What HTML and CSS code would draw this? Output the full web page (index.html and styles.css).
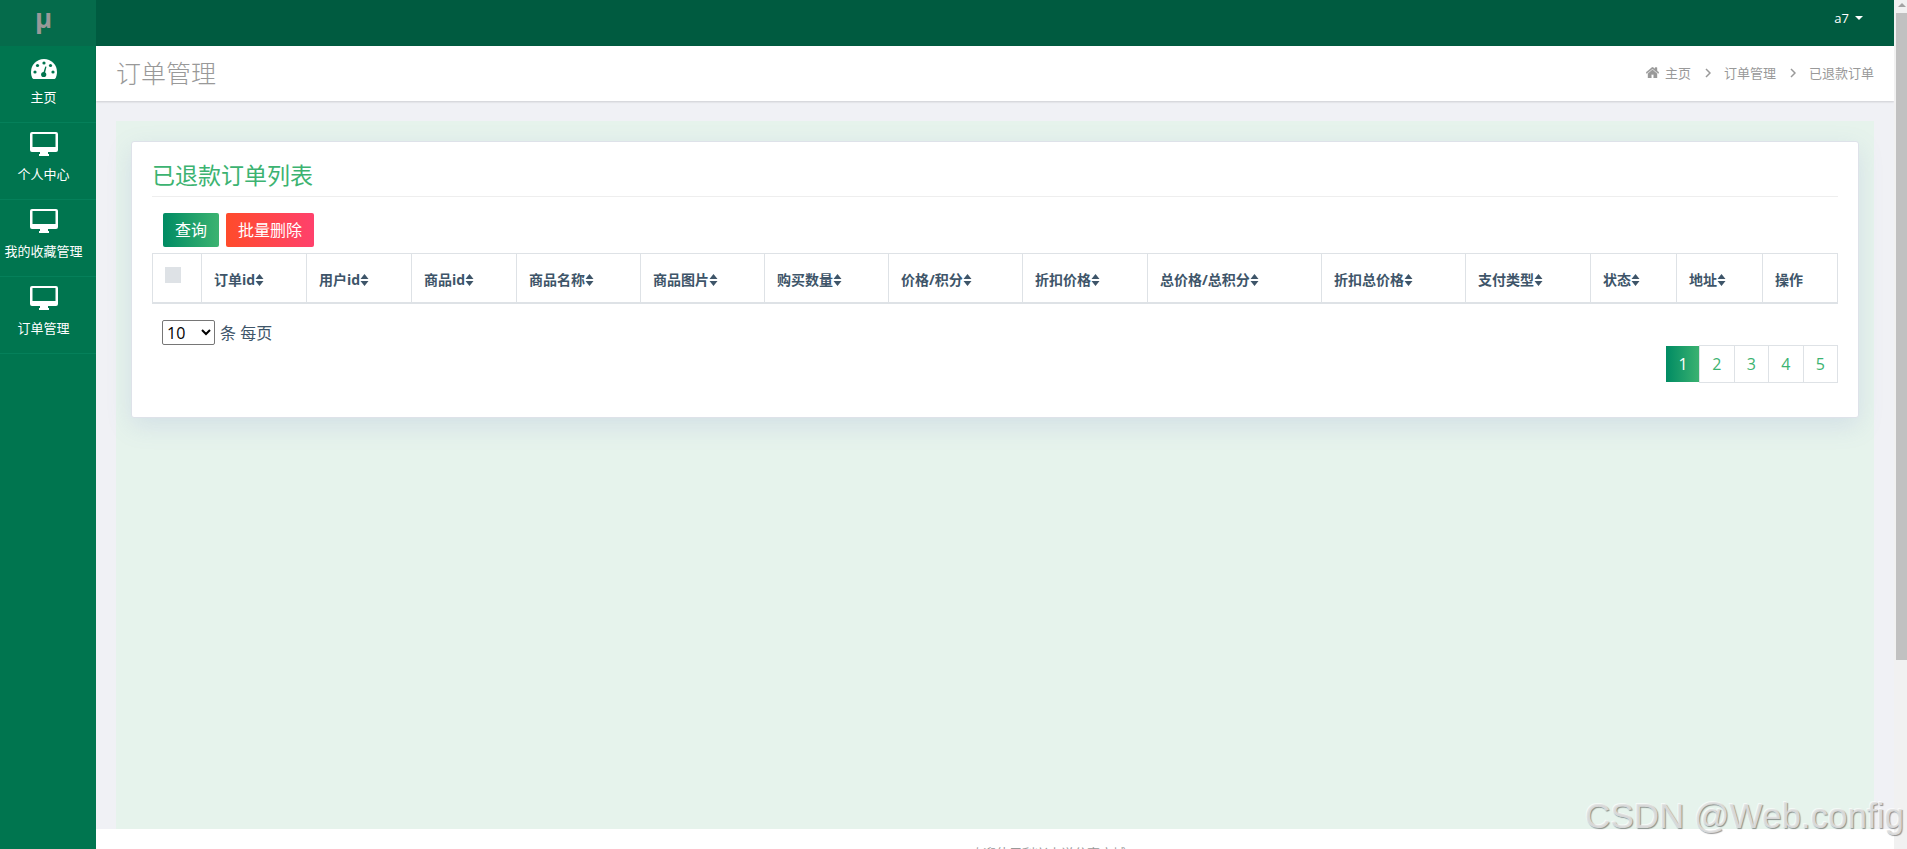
FILE: index.html
```
<!DOCTYPE html>
<html lang="zh-CN">
<head>
    <meta charset="UTF-8">
    <meta name="viewport" content="width=device-width, initial-scale=1.0">
    <title>订单管理</title>
    <link rel="stylesheet" href="styles.css">
</head>
<body>
    <!-- shared icons -->
    <svg class="icon-defs" width="0" height="0">
        <symbol id="icon-desktop" viewBox="0 0 28 24">
            <path fill-rule="evenodd" d="M2 0h24a2 2 0 0 1 2 2v16a2 2 0 0 1-2 2h-8v2h1v2H9v-2h1v-2H2a2 2 0 0 1-2-2V2a2 2 0 0 1 2-2zM2.500 2v13h23V2z"/>
        </symbol>
        <symbol id="icon-sort" viewBox="0 0 8 12">
            <path d="M4 0l4 5H0zM0 7h8l-4 5z"/>
        </symbol>
        <symbol id="icon-chevron" viewBox="0 0 6 10">
            <path d="M1 1l4 4-4 4" fill="none" stroke="#999" stroke-width="1.500"/>
        </symbol>
    </svg>

    <div class="page">
        <aside class="sidebar">
            <div class="logo">μ</div>
            <ul class="side-menu">
                <li>
                    <a href="#">
                        <svg class="menu-icon dashboard" viewBox="0 0 26 20">
                            <path d="M13 0a13 13 0 0 1 13 13c0 2.500-.6 4.800-1.700 6.600-.2.300-.5.400-.8.400h-21c-.3 0-.6-.1-.8-.4C.6 17.800 0 15.500 0 13A13 13 0 0 1 13 0z" fill="#fff"/>
                            <g fill="#00754f">
                                <circle cx="4" cy="13" r="1.600"/>
                                <circle cx="6.500" cy="6.500" r="1.600"/>
                                <circle cx="13" cy="4" r="1.600"/>
                                <circle cx="19.500" cy="6.500" r="1.600"/>
                                <circle cx="22" cy="13" r="1.600"/>
                                <circle cx="12.700" cy="15.500" r="2.600"/>
                                <path d="M14.300 7.400l1.200.3-1.800 7.300-1.600-.4z"/>
                            </g>
                        </svg>
                        <span>主页</span>
                    </a>
                </li>
                <li>
                    <a href="#">
                        <svg class="menu-icon"><use href="#icon-desktop"/></svg>
                        <span>个人中心</span>
                    </a>
                </li>
                <li>
                    <a href="#">
                        <svg class="menu-icon"><use href="#icon-desktop"/></svg>
                        <span>我的收藏管理</span>
                    </a>
                </li>
                <li>
                    <a href="#">
                        <svg class="menu-icon"><use href="#icon-desktop"/></svg>
                        <span>订单管理</span>
                    </a>
                </li>
            </ul>
        </aside>

        <div class="main">
            <nav class="topbar">
                <a class="user" href="#">a7 <i class="caret"></i></a>
            </nav>

            <header class="page-header">
                <h1>订单管理</h1>
                <ol class="breadcrumb">
                    <li>
                        <svg class="home" viewBox="0 0 13 11">
                            <path d="M6.500 2.700l4.500 3.800V11H7.700V7.500H5.300V11H2V6.500zM6.500 0L9 2.100V.6h2v3.200l2 1.700-.7 1-5.800-4.800L.7 6.500 0 5.500z" fill="#999" stroke="#999" stroke-width=".4"/>
                        </svg>
                        主页
                    </li>
                    <li><svg class="chevron"><use href="#icon-chevron"/></svg>订单管理</li>
                    <li><svg class="chevron"><use href="#icon-chevron"/></svg>已退款订单</li>
                </ol>
            </header>

            <div class="content">
                <section class="card">
                    <h3 class="card-title">已退款订单列表</h3>
                    <div class="actions">
                        <button class="btn btn-success">查询</button>
                        <button class="btn btn-danger">批量删除</button>
                    </div>
                    <table class="table">
                        <colgroup>
                            <col class="w-check">
                            <col class="w-id"><col class="w-id"><col class="w-id">
                            <col class="w-name"><col class="w-name"><col class="w-name">
                            <col class="w-price">
                            <col class="w-discount">
                            <col class="w-total">
                            <col class="w-discount-total">
                            <col class="w-pay">
                            <col class="w-state"><col class="w-state">
                            <col>
                        </colgroup>
                        <thead>
                            <tr>
                                <th><span class="checkbox"></span></th>
                                <th>订单id<svg class="sort"><use href="#icon-sort"/></svg></th>
                                <th>用户id<svg class="sort"><use href="#icon-sort"/></svg></th>
                                <th>商品id<svg class="sort"><use href="#icon-sort"/></svg></th>
                                <th>商品名称<svg class="sort"><use href="#icon-sort"/></svg></th>
                                <th>商品图片<svg class="sort"><use href="#icon-sort"/></svg></th>
                                <th>购买数量<svg class="sort"><use href="#icon-sort"/></svg></th>
                                <th>价格/积分<svg class="sort"><use href="#icon-sort"/></svg></th>
                                <th>折扣价格<svg class="sort"><use href="#icon-sort"/></svg></th>
                                <th>总价格/总积分<svg class="sort"><use href="#icon-sort"/></svg></th>
                                <th>折扣总价格<svg class="sort"><use href="#icon-sort"/></svg></th>
                                <th>支付类型<svg class="sort"><use href="#icon-sort"/></svg></th>
                                <th>状态<svg class="sort"><use href="#icon-sort"/></svg></th>
                                <th>地址<svg class="sort"><use href="#icon-sort"/></svg></th>
                                <th>操作</th>
                            </tr>
                        </thead>
                    </table>
                    <div class="page-size">
                        <select>
                            <option>10</option>
                            <option>25</option>
                            <option>50</option>
                        </select>
                        <span>条 每页</span>
                    </div>
                    <ul class="pagination">
                        <li class="active">1</li>
                        <li>2</li>
                        <li>3</li>
                        <li>4</li>
                        <li>5</li>
                    </ul>
                </section>
            </div>

            <footer class="footer">欢迎使用利兴小说分享商城</footer>
        </div>

        <div class="scrollbar">
            <i class="scroll-up"></i>
            <div class="scroll-thumb"></div>
        </div>
    </div>

    <div class="watermark">CSDN @Web.config</div>
</body>
</html>
```

FILE: styles.css
```
* {
    margin: 0;
    padding: 0;
    box-sizing: border-box;
}

body {
    height: 849px;
    overflow: hidden;
    background: #f0f1f5;
    color: #3e5569;
    font-family: "Open Sans", "Noto Sans CJK SC", sans-serif;
    font-size: 16px;
}

ul, ol {
    list-style: none;
}

a {
    color: inherit;
    text-decoration: none;
}

.icon-defs {
    position: absolute;
}

.page {
    display: flex;
    height: 849px;
    overflow: hidden;
}

/* sidebar */
.sidebar {
    width: 96px;
    background: #00754f;
    color: #fff;
}

.logo {
    height: 46px;
    padding-right: 9px;
    background: #056b4b;
    color: #999;
    font-size: 26px;
    font-weight: bold;
    line-height: 36px;
    text-align: center;
}

.side-menu li {
    height: 77px;
    border-bottom: 1px solid #05805a;
}

.side-menu a {
    display: flex;
    flex-direction: column;
    align-items: center;
    padding: 9px 9px 0 0;
    font-size: 13px;
    line-height: 20px;
    white-space: nowrap;
}

.menu-icon {
    width: 28px;
    height: 24px;
    margin-bottom: 8px;
    fill: #fff;
}

.menu-icon.dashboard {
    width: 26px;
    height: 20px;
    margin: 4px 0 8px;
}

/* main column */
.main {
    display: flex;
    flex: 1;
    flex-direction: column;
    min-width: 0;
}

.topbar {
    display: flex;
    flex: none;
    justify-content: flex-end;
    height: 46px;
    padding: 8px 31px 0 0;
    background: #005b40;
    color: #fff;
    font-size: 13px;
    line-height: 20px;
}

.user {
    display: flex;
    align-items: center;
    height: 20px;
    gap: 6px;
    font-weight: 500;
}

.caret {
    border: 4px solid transparent;
    border-top-color: #fff;
    border-bottom: 0;
}

.page-header {
    display: flex;
    flex: none;
    align-items: center;
    justify-content: space-between;
    height: 55px;
    padding: 0 20px 2px;
    background: #fff;
    box-shadow: 0 1px 2px rgba(0, 0, 0, 0.15);
    color: #999;
}

.page-header h1 {
    font-size: 25px;
    font-weight: 300;
    line-height: 50px;
}

.breadcrumb {
    display: flex;
    font-size: 13px;
    line-height: 20px;
}

.breadcrumb li {
    display: flex;
    align-items: center;
}

.home {
    width: 13px;
    height: 11px;
    margin-right: 6px;
}

.chevron {
    width: 6px;
    height: 10px;
    margin: 0 13px 0 14px;
}

.content {
    flex: none;
    height: 708px;
    margin: 20px 20px 0;
    padding: 20px 15px;
    background: #e6f3ec;
}

.card {
    height: 277px;
    padding: 15px 20px;
    border: 1px solid #dee2e9;
    border-radius: 3px;
    background: #fff;
    box-shadow: 0 8px 24px rgba(120, 130, 200, 0.17);
}

.card-title {
    height: 40px;
    border-bottom: 1px solid #eee;
    color: #3cb371;
    font-size: 23px;
    font-weight: 400;
    line-height: 37px;
}

.actions {
    display: flex;
    gap: 7px;
    padding: 16px 11px 6px;
}

.btn {
    height: 34px;
    padding: 0 12px;
    border: 0;
    border-radius: 2px;
    color: #fff;
    font-family: inherit;
    font-size: 16px;
    line-height: 34px;
}

.btn-success {
    background: linear-gradient(to right, #008b63, #3cb371);
}

.btn-danger {
    background: linear-gradient(to right, #ff4b2b, #ff416c);
}

.table {
    width: 1686px;
    border-collapse: collapse;
    table-layout: fixed;
}

.table th {
    height: 49px;
    padding: 4px 0 0 12px;
    border: 1px solid #dee2e6;
    border-bottom-width: 2px;
    font-size: 14px;
    font-weight: bold;
    line-height: 20px;
    text-align: left;
    white-space: nowrap;
}

.w-check { width: 49px; }
.w-id { width: 105px; }
.w-name { width: 124px; }
.w-price { width: 134px; }
.w-discount { width: 125px; }
.w-total { width: 174px; }
.w-discount-total { width: 144px; }
.w-pay { width: 125px; }
.w-state { width: 86px; }

.checkbox {
    display: block;
    width: 16px;
    height: 16px;
    margin-bottom: 9px;
    background: #dee2e6;
}

.sort {
    width: 9px;
    height: 12px;
    fill: #3e5569;
    vertical-align: -1px;
}

.page-size {
    display: flex;
    align-items: center;
    gap: 5px;
    height: 25px;
    margin: 16px 0 0 10px;
}

.page-size select {
    width: 53px;
    height: 25px;
    border: 1px solid #767676;
    border-radius: 2px;
    background: #fff;
    color: #000;
    font-family: inherit;
    font-size: 16px;
}

.pagination {
    display: flex;
    justify-content: flex-end;
    line-height: 36px;
    text-align: center;
}

.pagination li {
    width: 35px;
    height: 38px;
    margin-left: -1px;
    border: 1px solid #dee2e6;
    color: #3cb371;
}

.pagination li + li {
    width: 35.500px;
}

.pagination .active {
    width: 34px;
    height: 36px;
    margin: 1px 0 0;
    border: 0;
    background: linear-gradient(to right, #008b63, #3cb371);
    color: #fff;
}

.footer {
    flex: none;
    height: 60px;
    padding: 14px 0 0 106px;
    background: #fff;
    color: #999;
    font-size: 13px;
    line-height: 20px;
    text-align: center;
}

/* window scrollbar */
.scrollbar {
    display: flex;
    flex-direction: column;
    align-items: flex-end;
    width: 13px;
    background: #f1f1f1;
}

.scroll-up {
    margin: 3px 1px 6px 0;
    border: 4px solid transparent;
    border-top: 0;
    border-bottom-color: #a3a3a3;
}

.scroll-thumb {
    width: 11px;
    height: 647px;
    background: #c1c1c1;
}

.watermark {
    position: absolute;
    right: 3px;
    bottom: 13px;
    color: rgba(225, 225, 225, 0.9);
    font-family: "Liberation Sans", Arial, sans-serif;
    font-size: 35px;
    line-height: 40px;
    text-shadow: 1px 1px 1px rgba(0, 0, 0, 0.4), -1px -1px 0 rgba(255, 255, 255, 0.6);
    white-space: nowrap;
}
```
